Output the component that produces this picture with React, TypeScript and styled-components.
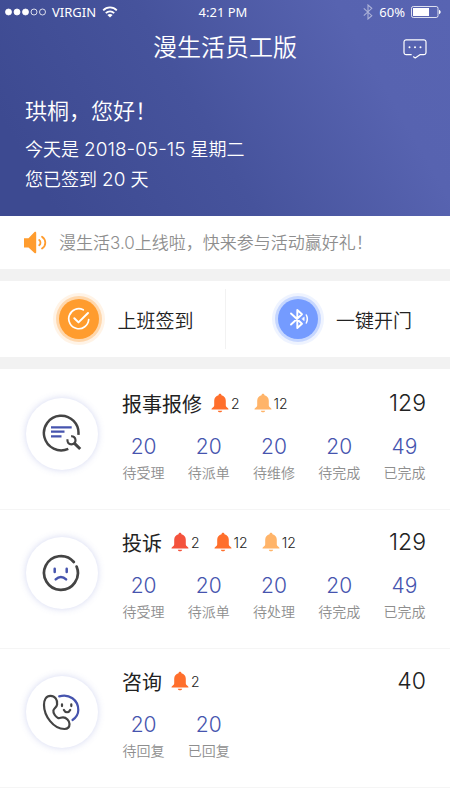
import React from "react";
import styled, { createGlobalStyle } from "styled-components";

const GlobalStyle = createGlobalStyle`
  * { box-sizing: border-box; }
  body {
    margin: 0;
    background: #fff;
    color: #222;
    font-family: "Inter", "Noto Sans CJK SC", sans-serif;
    font-weight: 350;
  }
  button {
    border: 0;
    padding: 0;
    background: none;
    color: inherit;
    font: inherit;
    cursor: pointer;
  }
  h1, h2, p, ul, dl, dd { margin: 0; padding: 0; font-weight: inherit; }
  ul { list-style: none; }
  svg { display: block; flex: none; }
`;

const Header = styled.header`
  height: 216px;
  color: #fff;
  background: linear-gradient(60deg, #3d4a91 10%, #46539c 45%, #5763b0 80%, #5864b2);
`;

const StatusBar = styled.div`
  display: grid;
  grid-template-columns: 1fr auto 1fr;
  align-items: center;
  height: 24px;
  padding: 0 9px 0 5px;
  font: 400 13px/24px "Noto Sans", sans-serif;
`;

const StatusGroup = styled.div<{ $end?: boolean }>`
  display: flex;
  align-items: center;
  gap: 6px;
  justify-content: ${(p) => (p.$end ? "flex-end" : "flex-start")};
`;

const TitleBar = styled.div`
  display: grid;
  grid-template-columns: 1fr auto 1fr;
  align-items: center;
  height: 48px;
  padding: 0 23px;
`;

const Title = styled.h1`
  grid-column: 2;
  font-size: 24px;
  line-height: 32px;
`;

const MessageButton = styled.button`
  justify-self: end;
`;

const Welcome = styled.div`
  padding: 23px 25px 0;
  font-size: 18px;
  line-height: 30px;
`;

const Greeting = styled.p`
  font-size: 22px;
  line-height: 32px;
  margin-bottom: 8px;
`;

const Figure = styled.span`
  font-size: 19px;
  font-weight: 300;
  line-height: 1;
`;

const Notice = styled.a`
  display: flex;
  align-items: center;
  gap: 11px;
  height: 53px;
  padding: 0 24px 2px;
  color: #8e8e8e;
  font-size: 17px;
  text-decoration: none;
`;

const Actions = styled.section`
  display: grid;
  grid-template-columns: 1fr 1fr;
  align-items: center;
  height: 100px;
  border: solid #f2f2f2;
  border-width: 12px 0;
`;

const Action = styled.button<{ $shift: number }>`
  display: flex;
  align-items: center;
  justify-content: center;
  gap: 18px;
  height: 60px;
  padding-left: ${(p) => p.$shift}px;
  font-size: 19px;

  & + & { border-left: 1px solid #f2f2f2; }
`;

const ActionIcon = styled.span<{ $rgb: string }>`
  display: grid;
  place-items: center;
  width: 40px;
  height: 40px;
  border-radius: 50%;
  background: rgb(${(p) => p.$rgb});
  box-shadow: 0 0 0 3px rgba(${(p) => p.$rgb}, 0.32), 0 0 0 6px rgba(${(p) => p.$rgb}, 0.12);
`;

const TaskList = styled.ul`
  padding-top: 2px;
`;

const TaskRow = styled.li`
  display: flex;
  align-items: flex-start;
  gap: 24px;
  height: 139px;
  padding: 17px 24px 0 26px;
  border-bottom: 1px solid #f5f5f5;
`;

const TaskIcon = styled.span`
  flex: none;
  display: grid;
  place-items: center;
  width: 72px;
  height: 72px;
  margin-top: 10px;
  border-radius: 50%;
  background: #fff;
  box-shadow: 0 0 7px rgba(88, 104, 200, 0.26);
`;

const TaskBody = styled.div`
  flex: 1;
  min-width: 0;
`;

const TaskHead = styled.div`
  display: flex;
  align-items: center;
  height: 30px;
`;

const TaskName = styled.h2`
  margin-right: 9px;
  font-size: 20px;
  font-weight: 400;
`;

const Alerts = styled.div`
  display: flex;
  gap: 14px;
`;

const Alert = styled.span`
  display: flex;
  align-items: center;
  gap: 2px;
  font-size: 14px;
  font-weight: 300;
`;

const Total = styled.strong`
  margin-left: auto;
  font-size: 23px;
  font-weight: 350;
`;

const Stats = styled.dl`
  display: grid;
  grid-template-columns: repeat(5, 1fr);
  gap: 22px;
  margin-top: 15px;
`;

const Stat = styled.div`
  display: flex;
  flex-direction: column-reverse;
  align-items: center;
  white-space: nowrap;
`;

const StatLabel = styled.dt`
  color: #8e8e8e;
  font-size: 14px;
  line-height: 24px;
`;

const StatValue = styled.dd`
  color: #4654ae;
  font-size: 21px;
  font-weight: 300;
  line-height: 28px;
`;

const SignalIcon = () => (
  <svg width="41" height="10" viewBox="0 0 41 10" fill="none" stroke="#fff" strokeWidth="0.8">
    {[3.5, 12, 20.5].map((x) => (
      <circle key={x} cx={x} cy="5" r="3" fill="#fff" />
    ))}
    <circle cx="29" cy="5" r="3" />
    <circle cx="37.5" cy="5" r="3" />
  </svg>
);

const WifiIcon = () => (
  <svg width="16" height="12" viewBox="0 0 16 12" fill="none" stroke="#fff" strokeWidth="1.8">
    <path d="M1.2 4.4C5 .4 11 .4 14.8 4.4M3.8 7.1c2.4-2.4 6-2.4 8.4 0" />
    <path d="M8 11.6 5.4 9c1.5-1.3 3.7-1.3 5.2 0Z" fill="#fff" stroke="none" />
  </svg>
);

const BluetoothStatusIcon = () => (
  <svg width="10" height="16" viewBox="0 0 10 16" fill="none" stroke="#fff" strokeOpacity="0.5" strokeWidth="1.1">
    <path d="m.8 4.4 8 7.3L5 15V1l3.8 3.3-8 7.3" />
  </svg>
);

const BatteryIcon = () => (
  <svg width="30" height="12" viewBox="0 0 30 12" fill="none">
    <rect x="0.5" y="0.5" width="26.5" height="11" rx="1.8" stroke="#fff" strokeOpacity="0.8" />
    <rect x="2" y="2" width="16" height="8" fill="#fff" />
    <path d="M28 3.8c2.2.8 2.2 3.6 0 4.4Z" fill="#fff" />
  </svg>
);

const MessageIcon = () => (
  <svg width="24" height="22" viewBox="0 0 24 22" fill="none" stroke="#fff" strokeWidth="1.2" strokeLinecap="round" strokeLinejoin="round">
    <path d="M8.2 17.700H3.200A2.200 2.200 0 0 1 1 15.500V5a2.200 2.200 0 0 1 2.200-2.200h17.600A2.200 2.200 0 0 1 23 5v10.500a2.200 2.200 0 0 1-2.200 2.200h-3.900l-4.700 3.300-1.700-1.200" />
    <path d="M6.500 10.300h.01M12 10.300h.01M17.500 10.300h.01" strokeWidth="2" />
  </svg>
);

const SpeakerIcon = () => (
  <svg width="24" height="24" viewBox="0 0 24 24" fill="none" stroke="#ff9c2e" strokeWidth="1.8" strokeLinecap="round">
    <path d="M0 8.300h4.500L10.500 2c.8-.7 1.700-.3 1.700.8v19.400c0 1.100-.9 1.500-1.700.8L4.500 17.500H0Z" fill="#ff9c2e" stroke="none" />
    <path d="M15.200 10c1.700 1.300 1.700 4 0 5.300M18 6.800c4.400 3 4.400 8.700 0 11.700" />
  </svg>
);

const CheckIcon = () => (
  <svg width="24" height="24" viewBox="0 0 24 24" fill="none" stroke="#fff" strokeWidth="1.700" strokeLinecap="round" strokeLinejoin="round">
    <path d="M16.200 2.800A10 10 0 1 0 21.700 12.500" />
    <path d="m7.300 11.200 4.200 4.200L21 6" strokeWidth="2" />
  </svg>
);

const DoorBluetoothIcon = () => (
  <svg width="24" height="24" viewBox="0 0 24 24" fill="none" stroke="#fff" strokeWidth="1.900" strokeLinecap="round" strokeLinejoin="round">
    <path d="m5 6.500 11 10.300-4.700 4.200V3L16 7.200 5 17.500" />
    <path d="M20.300 8c1.300 2.500 1.300 5.500 0 8" strokeWidth="1.500" />
    <path d="M18.200 10.300v3.400L16.100 12Z" fill="#fff" strokeWidth="0.600" />
  </svg>
);

const BellIcon = ({ color }: { color: string }) => (
  <svg width="18" height="20" viewBox="0 0 18 20" fill={color}>
    <path d="M9 .8c.9 0 1.500.6 1.500 1.500 2.600.6 4.300 2.700 4.300 5.500v4.400c0 1.100.6 1.900 1.900 2.700.8.500 1.100 1.700.4 1.700H.9c-.7 0-.4-1.200.4-1.700 1.300-.8 1.900-1.600 1.900-2.700V7.800c0-2.800 1.700-4.900 4.300-5.500C7.500 1.400 8.100.8 9 .8Z" />
    <path d="M6.800 17.700h4.400c-.5 2-3.900 2-4.400 0Z" />
  </svg>
);

const RepairIcon = () => (
  <svg width="40" height="40" viewBox="1 1 40 40" fill="none" stroke="#444" strokeWidth="2.500">
    <path d="M37.400 21.800A17.300 17.300 0 1 0 27.300 35.800" />
    <path d="M10 14.300h20.700M10 18.700h13.500M10 23.300h10.500" stroke="#4654ae" strokeWidth="2.200" />
    <path d="M26.600 26.200c-.8 2.700 1.100 5.200 3.800 5.200 2.500 0 4.300-2 4.100-4.400-.2-2.400-2.100-4-4.400-3.700" strokeWidth="2.200" />
    <path d="m33.200 30.200 6 5.800" strokeWidth="3" />
  </svg>
);

const SadIcon = () => (
  <svg width="40" height="40" viewBox="1 0 40 40" fill="none" strokeWidth="2.700" strokeLinecap="round">
    <path d="M32.800 9A16.900 16.900 0 1 0 35.600 13.600" stroke="#444" />
    <path d="M13.700 15.700v3.200M25.700 15.700v3.200M14.700 26.300c3.200-3 7.200-3 10.400 0" stroke="#4654ae" strokeWidth="2.500" />
  </svg>
);

const PhoneIcon = () => (
  <svg width="40" height="40" viewBox="1 0 40 40" fill="none" stroke="#444" strokeWidth="2.200" strokeLinecap="round" strokeLinejoin="round">
    <path d="M9.500 3.800C5 3.800 3 8 3 13 3 24 12.500 37 23.500 37c3.400 0 5-2.300 5-4.900 0-3.500-3.200-6.800-6.500-6.800-2.200 0-3.200 1.500-5 .7-2.500-1.200-5-5-4.600-7.500.4-2.200 3.200-3 3.700-6C16.800 8 13.900 3.800 9.500 3.800Z" />
    <path d="M18.200 4.400C28 1.200 37.300 8 37.300 18c0 4.200-2.300 7.600-5.800 10" stroke="#4654ae" />
    <path d="M21 12.300v1.800M30.300 12.300v1.800M22.900 18c1.500 3 4.800 3 6.300 0" />
  </svg>
);

const RED = "#f4523c";
const ORANGE = "#ff6f2c";
const AMBER = "#ffb469";

type Task = {
  name: string;
  icon: React.ReactNode;
  total: number;
  alerts: [string, number][];
  stats: [string, number][];
};

const TASKS: Task[] = [
  {
    name: "报事报修",
    icon: <RepairIcon />,
    total: 129,
    alerts: [[ORANGE, 2], [AMBER, 12]],
    stats: [["待受理", 20], ["待派单", 20], ["待维修", 20], ["待完成", 20], ["已完成", 49]],
  },
  {
    name: "投诉",
    icon: <SadIcon />,
    total: 129,
    alerts: [[RED, 2], [ORANGE, 12], [AMBER, 12]],
    stats: [["待受理", 20], ["待派单", 20], ["待处理", 20], ["待完成", 20], ["已完成", 49]],
  },
  {
    name: "咨询",
    icon: <PhoneIcon />,
    total: 40,
    alerts: [[ORANGE, 2]],
    stats: [["待回复", 20], ["已回复", 20]],
  },
];

export default function App() {
  return (
    <>
      <GlobalStyle />
      <Header>
        <StatusBar>
          <StatusGroup>
            <SignalIcon />
            <span>VIRGIN</span>
            <WifiIcon />
          </StatusGroup>
          <span>4:21 PM</span>
          <StatusGroup $end>
            <BluetoothStatusIcon />
            <span>60%</span>
            <BatteryIcon />
          </StatusGroup>
        </StatusBar>
        <TitleBar>
          <Title>漫生活员工版</Title>
          <MessageButton aria-label="消息">
            <MessageIcon />
          </MessageButton>
        </TitleBar>
        <Welcome>
          <Greeting>珙桐，您好！</Greeting>
          <p>
            今天是 <Figure>2018-05-15</Figure> 星期二
          </p>
          <p>
            您已签到 <Figure>20</Figure> 天
          </p>
        </Welcome>
      </Header>
      <main>
        <Notice href="#notice">
          <SpeakerIcon />
          <span>漫生活3.0上线啦，快来参与活动赢好礼！</span>
        </Notice>
        <Actions>
          <Action $shift={28}>
            <ActionIcon $rgb="255, 156, 46">
              <CheckIcon />
            </ActionIcon>
            上班签到
          </Action>
          <Action $shift={14}>
            <ActionIcon $rgb="116, 155, 255">
              <DoorBluetoothIcon />
            </ActionIcon>
            一键开门
          </Action>
        </Actions>
        <TaskList>
          {TASKS.map((task) => (
            <TaskRow key={task.name}>
              <TaskIcon>{task.icon}</TaskIcon>
              <TaskBody>
                <TaskHead>
                  <TaskName>{task.name}</TaskName>
                  <Alerts>
                    {task.alerts.map(([color, count]) => (
                      <Alert key={color}>
                        <BellIcon color={color} />
                        {count}
                      </Alert>
                    ))}
                  </Alerts>
                  <Total>{task.total}</Total>
                </TaskHead>
                <Stats>
                  {task.stats.map(([label, value]) => (
                    <Stat key={label}>
                      <StatLabel>{label}</StatLabel>
                      <StatValue>{value}</StatValue>
                    </Stat>
                  ))}
                </Stats>
              </TaskBody>
            </TaskRow>
          ))}
        </TaskList>
      </main>
    </>
  );
}
